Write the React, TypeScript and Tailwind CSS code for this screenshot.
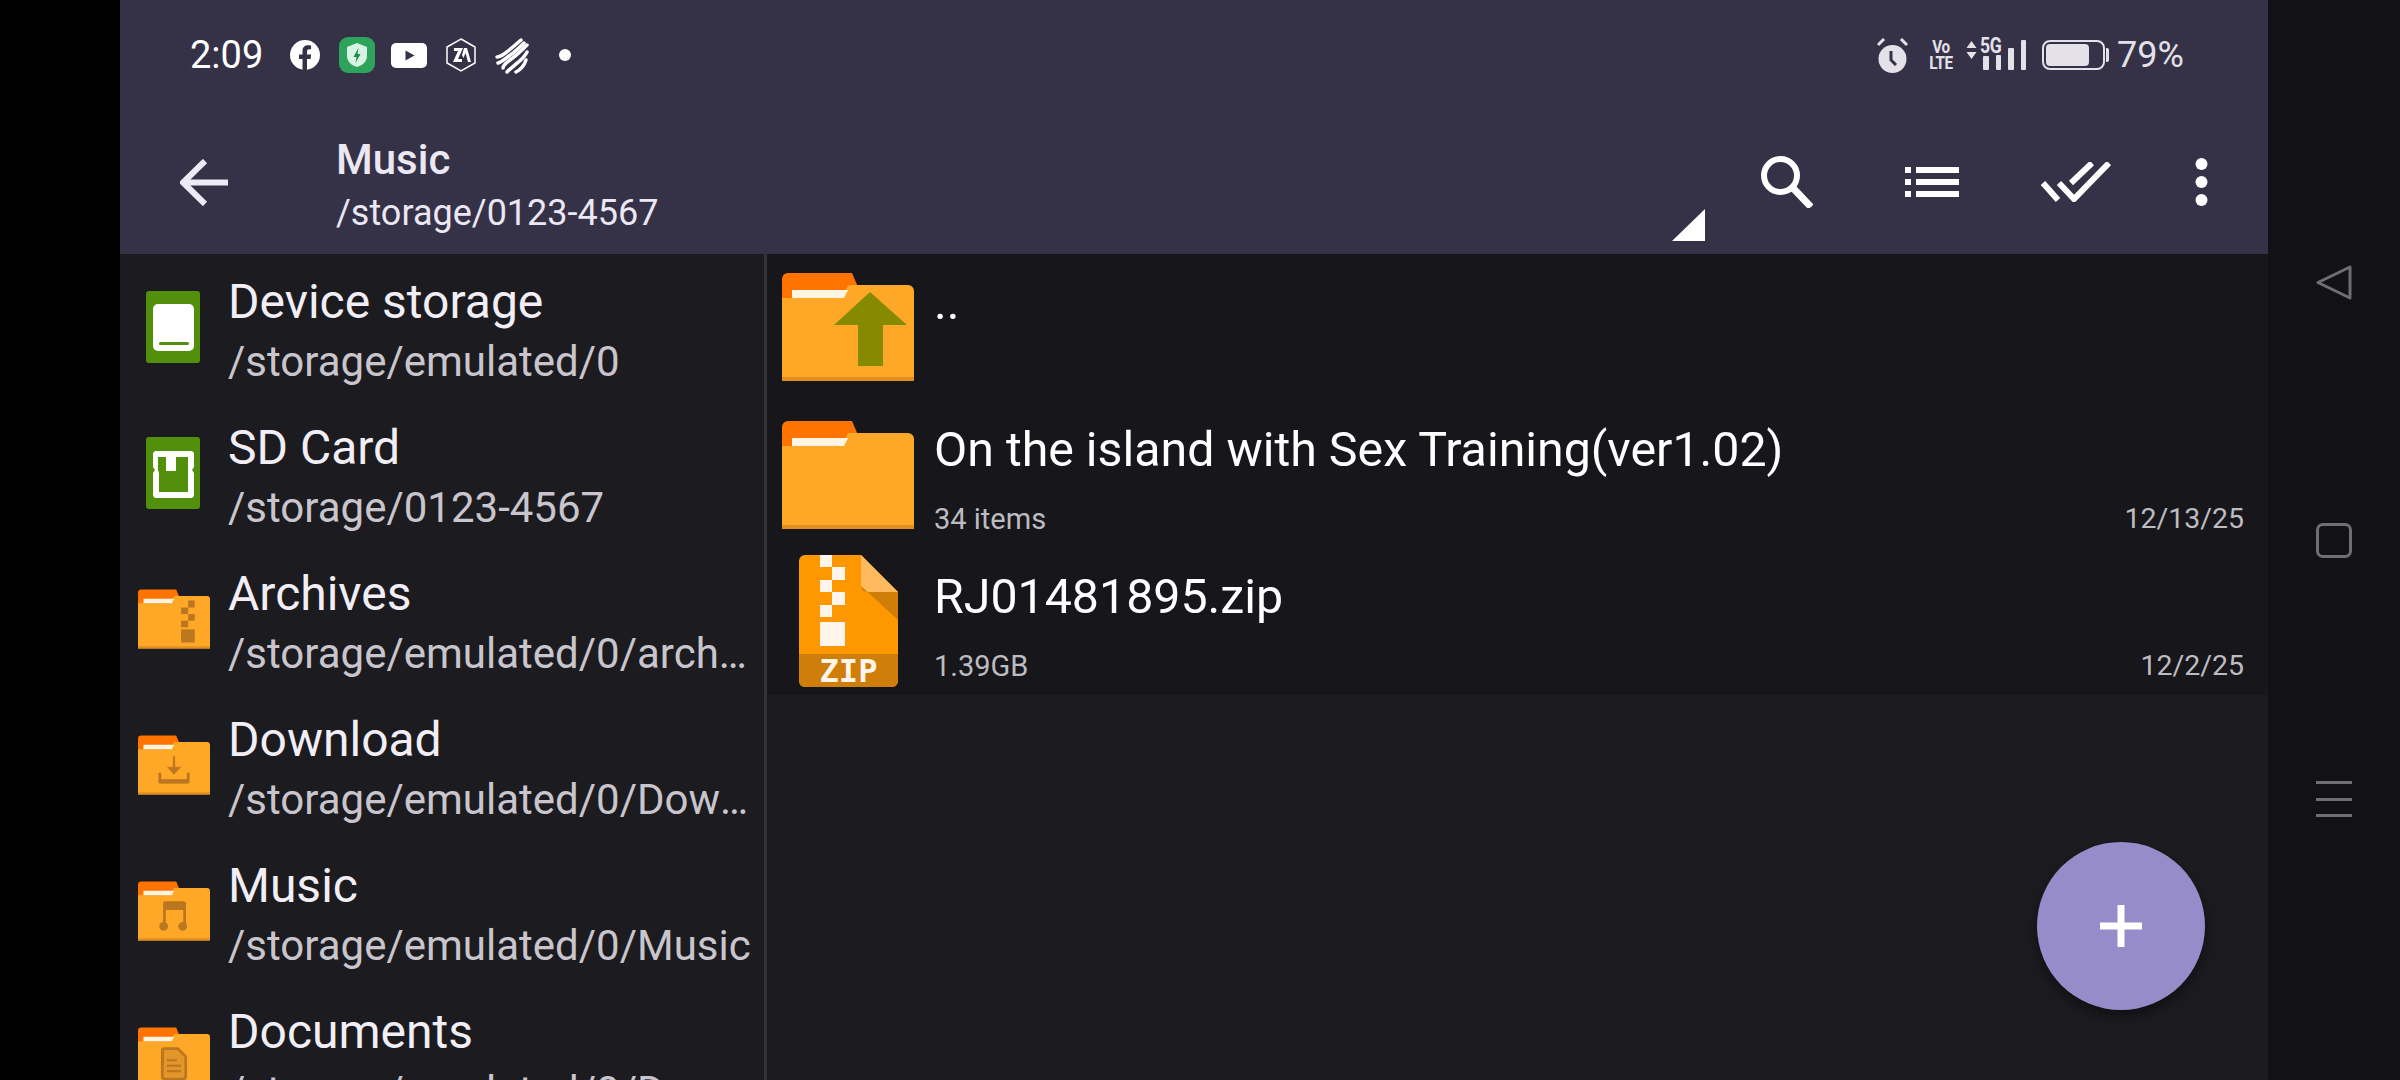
import React from "react";

function Folder({ className, children }: { className: string; children?: React.ReactNode }) {
  return (
    <svg viewBox="0 0 132 108" className={className}>
      <path d="M0 26V6a6 6 0 0 1 6-6h64l6 14v14H0z" fill="#ff7300" />
      <path d="M66 12h60a6 6 0 0 1 6 6v90H0V25h60z" fill="#ffa726" />
      <rect x="0" y="104" width="132" height="4" fill="#e08f20" />
      <path d="M10 17h56l-4 8H10z" fill="#fff5e2" />
      {children}
    </svg>
  );
}

const DK = "#bb771f";

function ZipIcon() {
  return (
    <svg viewBox="0 0 99 132" className="w-[99px] h-[132px]">
      <path d="M6 0h56l37 37v89a6 6 0 0 1-6 6H6a6 6 0 0 1-6-6V6a6 6 0 0 1 6-6z" fill="#ff9800" />
      <path d="M62 0l37 37H68a6 6 0 0 1-6-6z" fill="#ffb95e" />
      <path d="M62 31a6 6 0 0 0 6 6h31v28z" fill="#cf7f08" />
      <path d="M0 99h99v27a6 6 0 0 1-6 6H6a6 6 0 0 1-6-6z" fill="#d07e0a" />
      <g fill="#fff5ea">
        <rect x="21" y="0" width="12" height="12" />
        <rect x="33" y="12" width="13" height="13" />
        <rect x="21" y="25" width="12" height="12" />
        <rect x="33" y="37" width="13" height="13" />
        <rect x="21" y="50" width="12" height="12" />
        <rect x="21" y="67" width="25" height="24" />
      </g>
      <text x="49.5" y="127" textAnchor="middle" fontFamily="'DejaVu Sans Mono', monospace" fontWeight="700" fontSize="32" fill="#fff5ea">ZIP</text>
    </svg>
  );
}

function Storage() {
  return (
    <svg viewBox="0 0 54 72" className="w-[54px] h-[72px] -translate-x-[1px]">
      <rect width="54" height="72" rx="3" fill="#528f0a" />
      <rect x="7" y="13" width="41" height="47" rx="5" fill="#fff" />
      <rect x="13" y="51" width="30" height="3" rx="1.5" fill="#528f0a" />
    </svg>
  );
}

function SdCard() {
  return (
    <svg viewBox="0 0 54 72" className="w-[54px] h-[72px] -translate-x-[1px]">
      <rect width="54" height="72" rx="3" fill="#528f0a" />
      <path d="M9 14h37l2 2v14l-2 3 2 3v23l-2 2H9l-2-2V36l2-3-2-3V16z" fill="#fff" />
      <path d="M12 20h8v14h10V20h12v35H13V36l-1-3z" fill="#528f0a" />
    </svg>
  );
}

function ArchiveOverlay() {
  return (
    <g fill={DK}>
      <rect x="92" y="20" width="12" height="13" />
      <rect x="79" y="33" width="13" height="12" />
      <rect x="92" y="45" width="12" height="12" />
      <rect x="79" y="57" width="13" height="12" />
      <rect x="79" y="73" width="25" height="24" />
    </g>
  );
}

function DownloadOverlay() {
  return (
    <g fill="none" stroke={DK}>
      <path d="M66 38v32" strokeWidth="4" />
      <path d="M54 58l12 13 12-13z" fill={DK} strokeWidth="1" />
      <path d="M40 68v17h52V68" strokeWidth="5" />
      <path d="M40 84h52" strokeWidth="8" />
    </g>
  );
}

function MusicOverlay() {
  return (
    <g fill={DK}>
      <path d="M46 40a4 4 0 0 1 4-4h34a4 4 0 0 1 4 4v40h-5V52H51v28h-5z" />
      <rect x="50" y="38" width="34" height="12" opacity="0.7" />
      <circle cx="47" cy="82" r="8" />
      <circle cx="82" cy="82" r="8" />
    </g>
  );
}

function DocOverlay() {
  return (
    <g>
      <path d="M48 36h26l16 16v38a6 6 0 0 1-6 6H48a6 6 0 0 1-6-6V42a6 6 0 0 1 6-6z" fill={DK} />
      <path d="M48 41h24l13 13v35a3 3 0 0 1-3 3H50a3 3 0 0 1-3-3z" fill="#e5962a" />
      <g fill={DK}>
        <rect x="53" y="58" width="18" height="4" />
        <rect x="53" y="68" width="26" height="4" />
        <rect x="53" y="78" width="26" height="4" />
      </g>
    </g>
  );
}

function UpOverlay() {
  return <path d="M88 19l37 33h-24v41H76V52H52z" fill="#858a00" />;
}

const drawer = [
  { t: "Device storage", s: "/storage/emulated/0", i: <Storage /> },
  { t: "SD Card", s: "/storage/0123-4567", i: <SdCard /> },
  { t: "Archives", s: "/storage/emulated/0/archives", i: <Folder className="w-[72px] h-[60px]"><ArchiveOverlay /></Folder> },
  { t: "Download", s: "/storage/emulated/0/Download", i: <Folder className="w-[72px] h-[60px]"><DownloadOverlay /></Folder> },
  { t: "Music", s: "/storage/emulated/0/Music", i: <Folder className="w-[72px] h-[60px]"><MusicOverlay /></Folder> },
  { t: "Documents", s: "/storage/emulated/0/Documents", i: <Folder className="w-[72px] h-[60px]"><DocOverlay /></Folder> },
];

function StatusLeft() {
  return (
    <div className="flex items-center">
      <span className="w-[100px] text-[38px] leading-[44px] text-white">2:09</span>
      <svg viewBox="0 0 30 30" className="w-[30px] h-[30px]">
        <circle cx="15" cy="15" r="15" fill="#fff" />
        <path d="M12.5 30V19H9v-4.500h3.500v-3.500c0-3.800 2.300-5.800 5.600-5.800 1.600 0 3 .2 3 .2v3.800h-1.700c-1.900 0-2.400 1.100-2.400 2.300v3h4.200l-.7 4.500h-3.500v11z" fill="#353248" />
      </svg>
      <svg viewBox="0 0 36 36" className="w-[36px] h-[36px] ml-[19px]">
        <rect width="36" height="36" rx="9" fill="#2ea35c" />
        <path d="M18 6l10 4v9c0 6-5 9.500-10 11-5-1.500-10-5-10-11v-9z" fill="#d8f2e3" />
        <path d="M19.500 11l-5 9h3l-1 6 5-9h-3z" fill="#1f8a49" />
      </svg>
      <svg viewBox="0 0 36 25" className="w-[36px] h-[25px] ml-[16px]">
        <rect width="36" height="25" rx="5" fill="#fff" />
        <path d="M14.500 7.500l9 5-9 5z" fill="#353248" />
      </svg>
      <svg viewBox="0 0 32 34" className="w-[32px] h-[34px] ml-[18px]">
        <path d="M16 1l14 8v16l-14 8-14-8V9z" fill="none" stroke="#fff" strokeWidth="1.500" />
        <path d="M9 10h9l-5 11h4v3H8l5-11H9z M19 10h3l4 14h-3l-2.500-9-2 5-1.500-3z" fill="#fff" />
      </svg>
      <svg viewBox="0 0 35 37" className="w-[35px] h-[37px] ml-[18px]" fill="none" stroke="#fff" strokeWidth="3.500" strokeLinecap="round">
        <path d="M2 20c2 0 4-1 7-3 6-4 11-9 17-14" />
        <path d="M3 26c4-1 7-4 11-7 6-4 10-8 15-13" />
        <path d="M8 31c0-3 3-5 7-8 6-4 10-8 17-15" />
        <path d="M12 35c2-3 5-4 9-8 4-3 8-6 11-12" />
        <path d="M21 35c4-2 8-6 10-12" />
      </svg>
      <span className="w-[12px] h-[12px] ml-[29px] rounded-full bg-white" />
    </div>
  );
}

function StatusRight() {
  return (
    <div className="flex items-center ml-auto pr-[84px] text-[#e4e1e8]">
      <svg viewBox="0 0 31 35" className="w-[31px] h-[35px]">
        <circle cx="15.500" cy="21" r="14" fill="#e4e1e8" />
        <path d="M1 7l6-6M30 7l-6-6" stroke="#e4e1e8" strokeWidth="3" />
        <path d="M14 13v9l5 5" stroke="#353248" strokeWidth="3" fill="none" />
      </svg>
      <div className="w-[22px] ml-[22px] flex flex-col items-center font-bold text-[18px] leading-[16px] tracking-[-0.5px] scale-x-[0.85]">
        <span>Vo</span>
        <span>LTE</span>
      </div>
      <svg viewBox="0 0 11 20" className="w-[11px] h-[20px] ml-[14px] -mt-[10px]">
        <path d="M5.500 1l5 7H.5zM5.500 19l5-7H.5z" fill="#e4e1e8" />
      </svg>
      <div className="relative w-[46px] h-[30px] ml-[3px]">
        <span className="absolute left-0 -top-[4px] font-bold text-[22px] leading-[20px] tracking-[-0.5px] scale-x-[0.8] origin-left">5G</span>
        <div className="absolute inset-0 flex items-end gap-[7px] pl-[3px]">
          <span className="w-[7px] h-[14px] bg-[#e4e1e8] rounded-[1px]" />
          <span className="w-[7px] h-[15px] bg-[#e4e1e8] rounded-[1px]" />
          <span className="w-[7px] h-[22px] bg-[#e4e1e8] rounded-[1px]" />
          <span className="w-[7px] h-[30px] bg-[#e4e1e8] rounded-[1px]" />
        </div>
      </div>
      <div className="flex items-center ml-[16px]">
        <div className="w-[63px] h-[30px] border-2 border-[#e4e1e8] rounded-[8px] p-[2px] pr-[14px]">
          <div className="w-full h-full bg-[#e4e1e8] rounded-[4px]" />
        </div>
        <span className="w-[3px] h-[14px] ml-[1px] bg-[#e4e1e8] rounded-r-[2px]" />
      </div>
      <span className="ml-[8px] w-[67px] text-[36px] leading-[44px]">79%</span>
    </div>
  );
}

function ToolIcons() {
  return (
    <div className="flex items-center ml-auto pr-[60px]">
      <svg viewBox="0 0 52 52" className="w-[52px] h-[52px]" fill="none" stroke="#fff">
        <circle cx="19.500" cy="19.500" r="16.500" strokeWidth="6" />
        <path d="M32 32l18 19" strokeWidth="7" />
      </svg>
      <svg viewBox="0 0 54 30" className="w-[54px] h-[30px] ml-[92px]" fill="#fff">
        <rect x="0" y="0" width="6" height="6" />
        <rect x="11" y="0" width="43" height="6" />
        <rect x="0" y="12" width="6" height="6" />
        <rect x="11" y="12" width="43" height="6" />
        <rect x="0" y="24" width="6" height="6" />
        <rect x="11" y="24" width="43" height="6" />
      </svg>
      <svg viewBox="0 0 70 40" className="w-[70px] h-[40px] ml-[82px]" fill="none" stroke="#fff" strokeWidth="6">
        <path d="M2 21l15 17" />
        <path d="M18 21l15 16L68 1" />
        <path d="M30 21L51 1" />
      </svg>
      <svg viewBox="0 0 13 48" className="w-[13px] h-[48px] ml-[84px]" fill="#fff">
        <circle cx="6.500" cy="6" r="6" />
        <circle cx="6.500" cy="24" r="6" />
        <circle cx="6.500" cy="42" r="6" />
      </svg>
    </div>
  );
}

function Header() {
  return (
    <header className="relative h-[254px] shrink-0 bg-[#353248] flex flex-col">
      <div className="h-[110px] flex items-center pl-[70px] shrink-0">
        <StatusLeft />
        <StatusRight />
      </div>
      <div className="flex-1 flex items-center pl-[60px]">
        <svg viewBox="0 0 48 47" className="w-[48px] h-[47px] shrink-0" fill="none" stroke="#eeeaf5" strokeWidth="6">
          <path d="M48 23.500H4" />
          <path d="M25 2L3 23.500 25 45" />
        </svg>
        <div className="ml-[108px] pt-[8px] flex flex-col">
          <span className="text-[42px] leading-[52px] font-medium text-[#ebe7f3]">Music</span>
          <span className="mt-[1px] text-[36px] leading-[52px] text-[#ebe7f3]">/storage/0123-4567</span>
        </div>
        <ToolIcons />
      </div>
      <svg viewBox="0 0 33 32" className="absolute left-[1552px] top-[209px] w-[33px] h-[32px]">
        <path d="M33 0v32H0z" fill="#fff" />
      </svg>
    </header>
  );
}

function Sidebar() {
  return (
    <aside className="w-[647px] shrink-0 border-r-[3px] border-[#333237] bg-[#1c1b20]">
      {drawer.map((d) => (
        <div key={d.t} className="h-[146px] flex items-center">
          <div className="w-[108px] flex justify-center shrink-0">{d.i}</div>
          <div className="w-[526px] pt-[9px]">
            <div className="text-[48px] leading-[60px] text-[#f1eef5]">{d.t}</div>
            <div className="text-[42px] leading-[60px] text-[#c9c5cd] truncate">{d.s}</div>
          </div>
        </div>
      ))}
    </aside>
  );
}

function FileRow({ icon, title, sub, date, iconPt, iconPl }: { icon: React.ReactNode; title: string; sub?: string; date?: string; iconPt: string; iconPl: string }) {
  return (
    <div className="flex h-[147px]">
      <div className={`w-[167px] shrink-0 ${iconPt} ${iconPl}`}>{icon}</div>
      <div className="flex-1 pr-[24px] pt-[19px]">
        <div className="text-[48.3px] leading-[60px] text-white">{title}</div>
        {sub ? (
          <div className="mt-[19px] flex items-center justify-between text-[#bdbcc0] leading-[40px]">
            <span className="text-[29px]">{sub}</span>
            <span className="text-[28.5px]">{date}</span>
          </div>
        ) : null}
      </div>
    </div>
  );
}

function Files() {
  return (
    <main className="relative flex-1 bg-[#1c1b20]">
      <div className="bg-[#17161b]">
        <FileRow iconPt="pt-[19px]" iconPl="pl-[15px]" title=".." icon={<Folder className="w-[132px] h-[108px]"><UpOverlay /></Folder>} />
        <FileRow iconPt="pt-[20px]" iconPl="pl-[15px]" title="On the island with Sex Training(ver1.02)" sub="34 items" date="12/13/25" icon={<Folder className="w-[132px] h-[108px]" />} />
        <FileRow iconPt="pt-[7px]" iconPl="pl-[32px]" title="RJ01481895.zip" sub="1.39GB" date="12/2/25" icon={<ZipIcon />} />
      </div>
      <button className="absolute right-[63px] bottom-[70px] w-[168px] h-[168px] rounded-full bg-[#968cc9] shadow-[0_6px_14px_rgba(0,0,0,0.45)] flex items-center justify-center">
        <svg viewBox="0 0 42 42" className="w-[42px] h-[42px]" fill="#fff">
          <rect x="17.500" y="0" width="7" height="42" />
          <rect x="0" y="17.500" width="42" height="7" />
        </svg>
      </button>
    </main>
  );
}

function NavBar() {
  return (
    <nav className="w-[132px] shrink-0 bg-[#121116] flex flex-col items-center pt-[265px]">
      <svg viewBox="0 0 36 35" className="w-[36px] h-[35px]" fill="none" stroke="#6f6e72" strokeWidth="3" strokeLinejoin="round">
        <path d="M2 17.500L34 2v31z" />
      </svg>
      <div className="w-[36px] h-[35px] mt-[223px] border-[3px] border-[#6f6e72] rounded-[7px]" />
      <div className="w-[36px] h-[36px] mt-[223px] flex flex-col justify-between">
        <span className="h-[3px] bg-[#6f6e72]" />
        <span className="h-[3px] bg-[#6f6e72]" />
        <span className="h-[3px] bg-[#6f6e72]" />
      </div>
    </nav>
  );
}

export default function App() {
  return (
    <div className="w-[2400px] h-[1080px] flex overflow-hidden bg-black font-['Roboto',sans-serif]">
      <div className="w-[120px] shrink-0 bg-black" />
      <div className="w-[2148px] shrink-0 flex flex-col">
        <Header />
        <div className="flex-1 flex min-h-0">
          <Sidebar />
          <Files />
        </div>
      </div>
      <NavBar />
    </div>
  );
}
